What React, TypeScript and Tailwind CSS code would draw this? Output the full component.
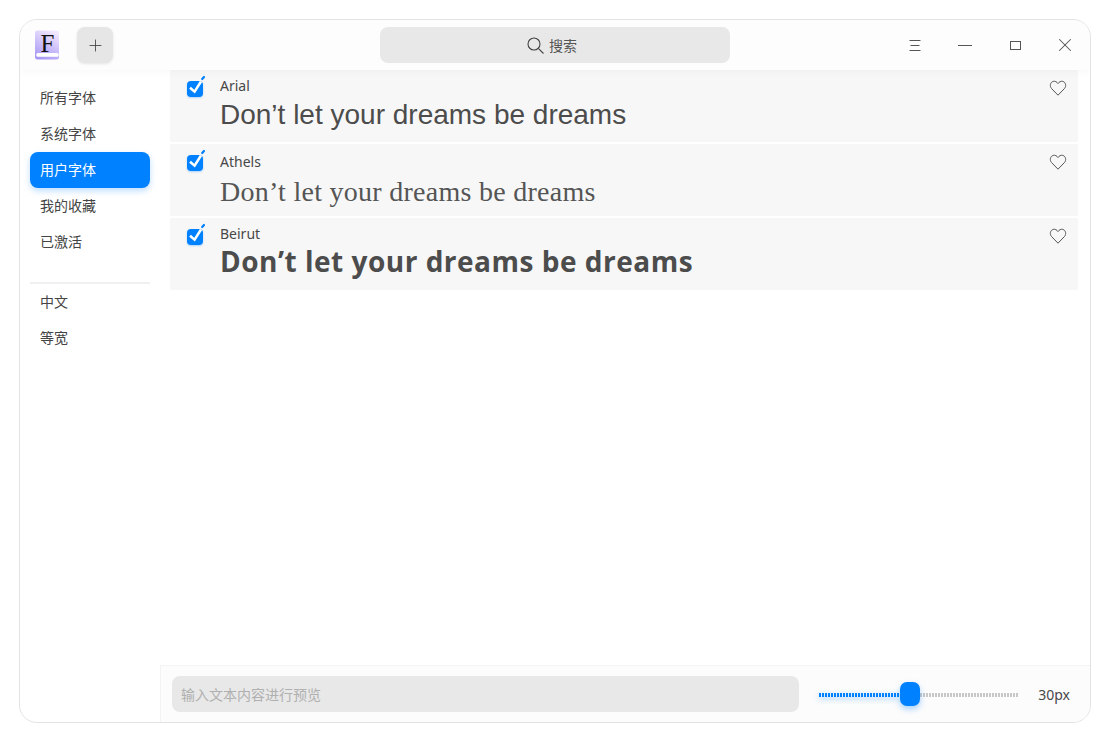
import { useState } from "react";
import { Plus, X } from "lucide-react";

const UI = "font-['Noto_Sans','Noto_Sans_CJK_SC',sans-serif]";

const nav = ["所有字体", "系统字体", "用户字体", "我的收藏", "已激活"];
const nav2 = ["中文", "等宽"];

const fonts = [
  { name: "Arial", label: "mt-[6px]", cls: "font-['Liberation_Sans',sans-serif] text-[28px] leading-[36px] mt-[1px] text-[#4c4c4c]" },
  { name: "Athels", label: "mt-[8px]", cls: "font-['Liberation_Serif',serif] text-[28px] tracking-[0.27px] leading-[36px] mt-[2px] text-[#555]" },
  { name: "Beirut", label: "mt-[6px]", cls: "font-['Open_Sans',sans-serif] font-bold text-[28px] tracking-[0.5px] leading-[36px] mt-[-1px] text-[#4c4c4c]" },
];

function Logo() {
  return (
    <svg width="26" height="30" viewBox="0 0 26 30" className="mt-[-1px]">
      <defs>
        <linearGradient id="lg" x1="0.7" y1="0" x2="0.3" y2="1">
          <stop offset="0" stopColor="#f2e8ff" />
          <stop offset="1" stopColor="#a898f5" />
        </linearGradient>
      </defs>
      <rect x="1" y="0.5" width="24" height="29" rx="2.5" fill="url(#lg)" />
      <rect x="2.3" y="23" width="22.3" height="3.8" rx="1.5" fill="#fff" />
      <text x="13.5" y="22" textAnchor="middle" fontSize="25" fontFamily="'Liberation Serif',serif" fill="#111">F</text>
    </svg>
  );
}

function Check() {
  return (
    <div className="relative w-4 h-4 rounded-[4px] bg-[#0081ff] shadow-[0_1px_2px_rgba(0,129,255,0.3)]">
      <svg className="absolute left-0 top-[-6px]" width="20" height="22" viewBox="0 0 20 22">
        <path d="M3 12.7 L7.6 16.7 L14 6.5" fill="none" stroke="#fff" strokeWidth="2.5" />
        <path d="M15.2 4 L17 2" fill="none" stroke="#0081ff" strokeWidth="2.2" strokeLinecap="round" />
      </svg>
    </div>
  );
}

function Heart() {
  return (
    <svg width="18" height="18" viewBox="0 0 18 18">
      <path
        d="M9 16.2 L2.6 9.6 C0.4 7.2 1.2 3.2 4.2 2.4 C6 1.9 7.9 2.8 9 4.6 C10.1 2.8 12 1.9 13.8 2.4 C16.8 3.2 17.6 7.2 15.4 9.6 Z"
        fill="none"
        stroke="#555"
        strokeWidth="1"
      />
    </svg>
  );
}

function Slider() {
  const ticks = Array.from({ length: 40 });
  return (
    <div className="relative w-[200px] h-[24px] flex items-center pt-[2px]">
      <div className="flex gap-px drop-shadow-[0_2px_3px_rgba(0,129,255,0.45)]">
        {ticks.slice(0, 27).map((_, i) => (
          <div key={i} className="w-[2px] h-[4px] bg-[#0081ff]" />
        ))}
      </div>
      <div className="flex gap-px ml-[21px]">
        {ticks.slice(0, 33).map((_, i) => (
          <div key={i} className="w-[2px] h-[4px] bg-[#c8c8c8]" />
        ))}
      </div>
      <div className="absolute left-[81px] top-0 w-[20px] h-[24px] rounded-[7px] bg-[#0081ff] shadow-[0_3px_6px_rgba(0,129,255,0.35)]" />
    </div>
  );
}

export default function App() {
  const [active] = useState(2);
  return (
    <div className={`w-[1110px] h-[742px] bg-white pt-[19px] pl-[19px] ${UI}`}>
      <div className="w-[1072px] h-[704px] rounded-[18px] border border-[#e3e3e3] bg-white overflow-hidden flex flex-col">
        <header className="relative z-10 h-[50px] shrink-0 bg-[#fdfdfd] shadow-[0_2px_8px_rgba(0,0,0,0.03)] flex items-center">
          <div className="w-[360px] flex items-center pl-[14px]">
            <Logo />
            <button className="ml-[17px] w-9 h-9 rounded-[8px] bg-[#e6e6e6] shadow-[0_1px_3px_rgba(0,0,0,0.1)] flex items-center justify-center text-[#444]">
              <Plus size={19} strokeWidth={1.1} />
            </button>
          </div>
          <div className="w-[350px] h-9 rounded-[8px] bg-[#e8e8e8] flex items-center justify-center gap-[5px] pr-[6px] text-[14px] text-[#555]">
            <svg width="17" height="17" viewBox="0 0 17 17" fill="none" stroke="#444" strokeWidth="1.1">
              <circle cx="7" cy="7" r="6" />
              <path d="M11.3 11.3 L16.5 16.5" />
            </svg>
            <span>搜索</span>
          </div>
          <div className="flex-1 flex items-center justify-end text-[#555]">
            <div className="w-[50px] flex justify-center">
              <svg width="12" height="11" viewBox="0 0 12 11" stroke="#555" strokeWidth="1">
                <path d="M0.5 0.5H11.5M1.5 5.5H10.5M0.5 10.5H11.5" />
              </svg>
            </div>
            <div className="w-[50px] flex justify-center">
              <div className="w-[14px] h-px bg-[#555]" />
            </div>
            <div className="w-[50px] flex justify-center">
              <div className="w-[11px] h-[9px] border border-[#555]" />
            </div>
            <div className="w-[50px] flex justify-center">
              <X size={22} strokeWidth={1.1} />
            </div>
          </div>
        </header>

        <div className="flex-1 flex min-h-0">
          <aside className="w-[140px] shrink-0 px-[10px] pt-[10px] text-[14px] text-[#444]">
            {nav.map((n, i) => (
              <div
                key={n}
                className={`h-9 rounded-[8px] pl-[10px] pb-[2px] flex items-center ${i === active ? "bg-[#0081ff] text-white shadow-[0_3px_6px_rgba(0,129,255,0.25)]" : ""}`}
              >
                {n}
              </div>
            ))}
            <div className="h-[2px] bg-[#f0f0f0] mt-[22px]" />
            {nav2.map((n) => (
              <div key={n} className="h-9 pl-[10px] pb-[2px] flex items-center">
                {n}
              </div>
            ))}
          </aside>

          <main className="flex-1 flex flex-col min-w-0">
            <div className="flex-1 pl-[10px] pr-3 flex flex-col gap-[2px]">
              {fonts.map((f) => (
                <div key={f.name} className="h-[72px] bg-[#f7f7f7] rounded-[2px] relative flex">
                  <div className="w-[50px] shrink-0 pl-[17px] pt-[11px]">
                    <Check />
                  </div>
                  <div className="flex-1 text-[#484848]">
                    <div className={`text-[14px] leading-[20px] ${f.label}`}>{f.name}</div>
                    <div className={f.cls}>Don’t let your dreams be dreams</div>
                  </div>
                  <div className="absolute right-[11px] top-[9px]">
                    <Heart />
                  </div>
                </div>
              ))}
            </div>
            <footer className="h-[57px] shrink-0 bg-[#fcfcfc] border-t border-l border-[#f3f3f3] flex items-center pl-[11px] pr-[20px]">
              <div className="w-[627px] h-9 rounded-[8px] bg-[#e8e8e8] flex items-center pl-[9px] text-[14px] text-[#b0b0b0]">
                输入文本内容进行预览
              </div>
              <div className="ml-[20px]">
                <Slider />
              </div>
              <div className="ml-auto text-[14px] text-[#484848]">30px</div>
            </footer>
          </main>
        </div>
      </div>
    </div>
  );
}
